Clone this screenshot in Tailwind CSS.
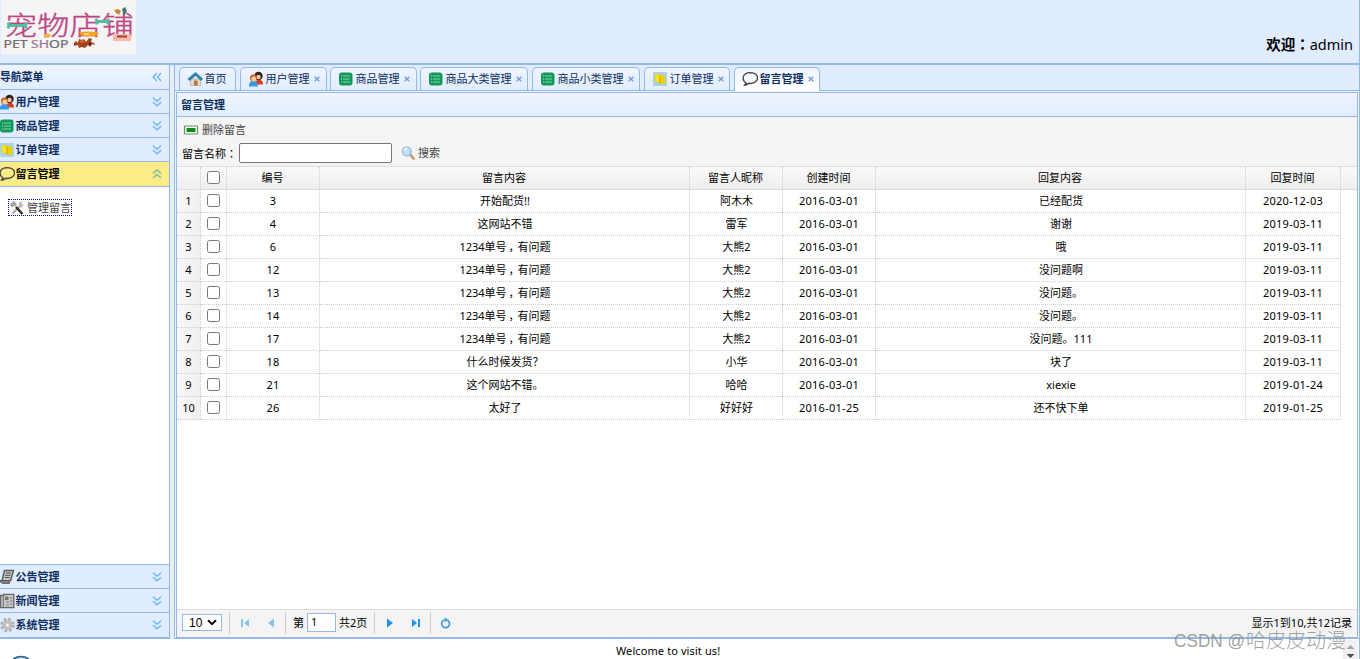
<!DOCTYPE html>
<html lang="zh-CN">
<head>
<meta charset="utf-8">
<title>留言管理</title>
<script src="https://cdn.jsdelivr.net/npm/@tailwindcss/browser@4"></script>
</head>
<body class="relative w-[1360px] h-[659px] overflow-hidden flex flex-col bg-white text-black text-[11px] leading-4 font-['Noto_Sans','Noto_Sans_CJK_SC',sans-serif]">
<svg class="hidden">
  <symbol id="down" viewBox="0 0 10 10"><path d="M1 .8 5 4.3 9 .8M1 5.2 5 8.7 9 5.2" fill="none" stroke="#6cb8f0" stroke-width="1.5"/></symbol>
  <symbol id="up" viewBox="0 0 10 10"><path d="M1 4.5 5 1 9 4.5M1 9 5 5.5 9 9" fill="none" stroke="#7fb9ab" stroke-width="1.5"/></symbol>
  <symbol id="left" viewBox="0 0 10 10"><path d="M4.8 1 1.2 5 4.8 9M9 1 5.4 5 9 9" fill="none" stroke="#6cb8f0" stroke-width="1.3"/></symbol>
  <symbol id="home" viewBox="0 0 16 16"><path d="M3.500 8h10v6.500h-10z" fill="#e0d9cd" stroke="#b1aba2" stroke-width=".7"/><path d="M1.500 8.800 8.500 3l6.500 5.800" fill="none" stroke="#2e86a8" stroke-width="3"/><path d="M7 9.500h3.600v5H7z" fill="#b9763a"/></symbol>
  <symbol id="users" viewBox="0 0 16 16"><path d="M7 13.500c0-3 1-4.500 4-4.500s4 2 4 4.500z" fill="#e23b22"/><circle cx="10.500" cy="5" r="4.200" fill="#2f211b"/><circle cx="10.500" cy="6" r="2.200" fill="#f5c79a"/><path d="M1 15.500C1 11.500 2.200 10 5.200 10s4.800 1.500 4.800 5.500z" fill="#359be5"/><circle cx="5.400" cy="7" r="3.500" fill="#c5601d"/><circle cx="5.800" cy="8" r="2.500" fill="#fbcf9c"/></symbol>
  <symbol id="list" viewBox="0 0 16 16"><rect x="1" y="1.500" width="13.500" height="13" rx="3" fill="#12985a"/><path d="M4.800 5h7.200M4.800 8h7.200M4.800 11h7.200" stroke="#86d4ab" stroke-width="1.200"/><path d="M3 5h1M3 8h1M3 11h1" stroke="#b6ead0" stroke-width="1"/></symbol>
  <symbol id="order" viewBox="0 0 16 16"><rect x="1" y="1" width="14" height="14" rx="1" fill="#a9d2f0"/><path d="m2.500 4 4.500-1.500 1.500 2 4-1 1.500 9-4.500.5-4-1.500-3-1z" fill="#edcf0b"/><path d="m7.800 4.500.5 8" stroke="#c6a600" stroke-width=".8"/><path d="m3 4.500 3.500-1 .7 6.500-3.200 1z" fill="#f8e32c"/></symbol>
  <symbol id="talk" viewBox="0 0 16 16"><path d="M4.200 12C-.8 8.800.3 1.800 8 1.600c7.600 0 9.200 5.600 5.800 8.900-1.900 1.800-4.700 2.200-7.200 1.800-1 1-2.700 2-4.800 2 1.500-.6 2.200-1.300 2.400-2.300z" fill="none" stroke="#4b4742" stroke-width="1.400"/></symbol>
  <symbol id="scroll" viewBox="0 0 16 16"><path d="M5.500 1.500h9l-3 10.300H3z" fill="#c9c9c9" stroke="#5c5c5c" stroke-width="1.500"/><path d="M7 4h5M6.300 6.300h5M5.600 8.600h5" stroke="#4b4b4b"/><path d="M1.200 11.500h8l1.500 2.800H3.500q-2.200-.3-2.300-2.800z" fill="#858585" stroke="#555"/></symbol>
  <symbol id="news" viewBox="0 0 16 16"><path d="M1.500 2.500h3V1.300h10.300v13.400H1.500z" fill="#c9c9c9" stroke="#666" stroke-width="1.300"/><path d="M4.300 3v11M7 9h3M7 12h3M11 5h2.500M11 8h2.500M11 11h2.500" stroke="#777" stroke-width="1.200"/><path d="M6 3.500h3.500V7H6z" fill="#777"/></symbol>
  <symbol id="gear" viewBox="0 0 16 16"><circle cx="8.500" cy="8" r="6" fill="none" stroke="#b0b0b0" stroke-width="2.600" stroke-dasharray="2.800 1.910"/><circle cx="8.500" cy="8" r="3.800" fill="#eee" stroke="#bbb" stroke-width="2.600"/><circle cx="8.500" cy="8" r="1.800" fill="#fff" stroke="#999" stroke-width=".6"/></symbol>
  <symbol id="tools" viewBox="0 0 16 16"><path d="M3.500 13.500 12 5" stroke="#aaa" stroke-width="2.200"/><path d="M10 2.500 13.500 1l-1 3 2 .5-1.500 3-3.500-.5z" fill="#bbb"/><path d="M2 3.500 5 1l3 3-1 2.500L5 6 3.500 7.500 1 5.500z" fill="#a5a5a5"/><path d="m7 7 6.500 7" stroke="#292929" stroke-width="2.500"/></symbol>
  <symbol id="minus" viewBox="0 0 16 16"><rect x="1.500" y="4" width="13" height="8" rx=".7" fill="#fff" stroke="#589a60" stroke-width="1.200"/><path d="M3.500 6h9v4h-9z" fill="#108a14"/></symbol>
  <symbol id="find" viewBox="0 0 16 16"><path d="m9 9.500 3.500 4" stroke="#c8935c" stroke-width="2.600" stroke-linecap="round"/><circle cx="5.800" cy="6.300" r="4.400" fill="#bfe1fb" stroke="#a6bdd4" stroke-width="1.500"/><path d="M3.400 6q.3-2.500 2.800-2.600" fill="none" stroke="#fff" stroke-width="1.300"/></symbol>
</svg>

<header class="h-[65px] shrink-0 flex justify-between border-b-2 border-r border-[#95b8e7] bg-[#e0ecff]">
  <svg class="ml-px block" width="135" height="54" viewBox="1 0 135 54">
    <rect x="1" width="135" height="54" fill="#f5f5f5"/>
    <g font-family="Noto Sans CJK SC" font-weight="300" font-size="26" fill="#bf4584" stroke="#bf4584" stroke-width=".35">
      <text x="5" y="35" textLength="129" lengthAdjust="spacingAndGlyphs">宠物店铺</text>
    </g>
    <path d="M10 25.500h15M97 21.500h10" stroke="#54bda1" stroke-width="2.800" stroke-linecap="round"/>
    <g fill="#54bda1"><circle cx="8.500" cy="24" r="1.700"/><circle cx="8.500" cy="27" r="1.700"/><circle cx="26" cy="24" r="1.700"/><circle cx="26" cy="27" r="1.700"/><circle cx="96.500" cy="20" r="1.700"/><circle cx="96.500" cy="23" r="1.700"/><circle cx="108" cy="20" r="1.700"/><circle cx="108" cy="23" r="1.700"/></g>
    <ellipse cx="47.500" cy="35.500" rx="3" ry="2" fill="#f2b334"/>
    <path d="M79 32.500q10-2 20 .5-2 4-9 3-8 2-11-3.500z" fill="#f0a51d"/><path d="M84 34h5" stroke="#fff"/>
    <path d="M113 34h18v7h-18z" fill="#f8b9a8"/><path d="M117 36.500h10" stroke="#a04236" stroke-width="2"/>
    <path d="m114 10 4-1 3 2-2 4-3-2z" fill="#c98735"/><path d="m122 9 3-2 2 4-3 5z" fill="#45796a"/>
    <path d="m74 43 2-2 2 2 1-4 3 1 2-1 2 3 3-4 3 1-1 3 3 1 1 2-3-1-2 3-2-2-3 3-3-1-3 1-1-3-4 1z" fill="#a5431e"/><circle cx="82" cy="41.500" r="1.800" fill="#dc6a2e"/><circle cx="90" cy="44" r="1.400" fill="#4e2013"/>
    <text x="3.500" y="47.500" font-family="Noto Sans" font-size="10" textLength="65" lengthAdjust="spacingAndGlyphs" fill="#716873" stroke="#716873" stroke-width=".2">PET <tspan fill="#b77b9f">SH</tspan>OP</text>
  </svg>
  <div class="pt-[34px] pr-[6px] text-[14.5px] leading-5"><b class="font-bold">欢迎<span lang="zh-TW" class="font-['Noto_Sans_CJK_TC']">：</span></b>admin</div>
</header>

<main class="h-[574px] shrink-0 flex bg-[#e6eef8]">
  <aside class="w-[170px] h-[574px] flex flex-col bg-white border-r border-b-2 border-[#95b8e7] font-bold text-[#0e2d5f]">
    <div class="h-[25px] shrink-0 flex items-center justify-between pr-[7px] border-b border-[#95b8e7] bg-linear-to-b from-[#eff5ff] to-[#e0ecff] tracking-[-0.2px]">导航菜单<svg class="size-[10px]"><use href="#left"/></svg></div>
    <nav id="topnav" class="flex flex-col"></nav>
    <div class="flex-1 pt-3 pl-2 font-normal">
      <a class="flex items-center w-16 h-[17px] border border-dotted border-[#0000b0] text-[#444]"><svg class="size-4 mr-0.5 shrink-0"><use href="#tools"/></svg>管理留言</a>
    </div>
    <nav id="botnav" class="flex flex-col"></nav>
  </aside>

  <section class="ml-1 w-[1186px] h-[574px] flex flex-col bg-[#eff5ff] border-x border-b border-[#95b8e7]">
    <div id="tabs" class="h-[26px] shrink-0 flex items-end gap-1 pl-1 bg-[#e0ecff] border-b border-[#95b8e7] text-[#0e2d5f]"></div>
    <div class="mt-px mx-px flex-1 flex flex-col border border-[#95b8e7] bg-white">
      <h1 class="h-6 shrink-0 flex items-center pl-1 border-b border-[#95b8e7] bg-linear-to-b from-[#eff5ff] to-[#e0ecff] font-bold text-[#0e2d5f]">留言管理</h1>
      <div class="h-[50px] shrink-0 border-b border-[#ddd] bg-[#f4f4f4]">
        <div class="h-[26px] flex items-center pl-[6px] text-[#444]"><svg class="size-4 mr-[3px]"><use href="#minus"/></svg>删除留言</div>
        <div class="flex items-center h-5 pl-[5px]"><span class="w-[57px]">留言名称<span lang="zh-TW" class="font-['Noto_Sans_CJK_TC']">：</span></span><input class="w-[153px] h-5 bg-white border border-[#767676] rounded-[2px]"><svg class="size-4 ml-[9px] mr-px"><use href="#find"/></svg><span class="text-[#444]">搜索</span></div>
      </div>
      <div id="grid" class="flex-1 flex flex-col"></div>
      <footer class="h-[28px] shrink-0 flex items-center pl-[5px] pr-[5px] pb-px border-t border-[#ddd] bg-[#f4f4f4]">
        <div class="w-10 h-[17px] mb-px flex items-center justify-between pl-[6px] pr-[4px] bg-white border border-[#95b8e7] text-[12px] font-['Liberation_Sans']">10<svg width="10" height="7" viewBox="0 0 10 7"><path d="m1 1.200 4 4 4-4" fill="none" stroke="#111" stroke-width="2"/></svg></div>
        <i class="ml-[7px] w-px h-[22px] bg-[#ccc]"></i>
        <svg class="ml-[10px]" width="10" height="10"><path d="M1 1h2v8H1zM9 1v8L4 5z" fill="#86c3ef"/></svg>
        <svg class="ml-[16px]" width="10" height="10"><path d="M8 .5v9L2 5z" fill="#86c3ef"/></svg>
        <i class="ml-[9px] w-px h-[22px] bg-[#ccc]"></i>
        <span class="ml-[7px] w-[14px]">第</span>
        <div class="w-[29px] h-[19px] mb-px pl-[3px] bg-white border border-[#95b8e7]">1</div>
        <span class="ml-[3px] w-[35px] whitespace-nowrap">共2页</span>
        <i class="w-px h-[22px] bg-[#ccc]"></i>
        <svg class="ml-[10px]" width="10" height="10"><path d="M2 .5v9L8 5z" fill="#1b93ea"/></svg>
        <svg class="ml-[16px]" width="10" height="10"><path d="M1 1v8L6 5zM7 1h2v8H7z" fill="#1b93ea"/></svg>
        <i class="ml-[9px] w-px h-[22px] bg-[#ccc]"></i>
        <svg class="ml-[9px]" width="11" height="12" viewBox="0 0 11 12"><path d="M7.500 3.200A4 4 0 1 1 4 3" fill="none" stroke="#3b9bdc" stroke-width="1.700"/><path d="m4.500.3 4 2.700-4 2.200z" fill="#3b9bdc"/></svg>
        <span class="ml-auto whitespace-nowrap">显示1到10,共12记录</span>
      </footer>
    </div>
  </section>
</main>

<div class="h-5 shrink-0 flex border-r border-[#95b8e7]">
  <svg class="ml-2 shrink-0" width="28" height="20"><circle cx="13" cy="30" r="12.500" fill="#c5d8ea" stroke="#285b8c" stroke-width="1.500"/></svg>
  <p class="flex-1 pt-1 pl-[580px] tracking-[0.1px]">Welcome to visit us!</p>
  <svg class="shrink-0 mt-px mr-[1px]" width="15" height="19"><path d="M0 0h15v19H0z" fill="#f1f1f1"/><path d="M3.500 9 7.500 5l4 4z" fill="#a3a3a3"/><path d="m3.500 14 4 4 4-4z" fill="#505050"/></svg>
</div>
<div class="absolute left-[1174px] top-[626px] flex whitespace-nowrap text-[20px] leading-7 text-[#888]/80 font-light font-['Noto_Sans_CJK_SC',sans-serif]"><svg width="72" height="28" class="shrink-0"><text x="0" y="21" textLength="71" lengthAdjust="spacingAndGlyphs" class="fill-[#888]/80 font-['Liberation_Sans'] text-[19px]">CSDN @</text></svg>哈皮皮动漫</div>

<script>
const icon = (id, cls) => `<svg class="${cls}"><use href="#${id}"/></svg>`;
const navItem = (id, text, cls, arrow) => `<a class="${cls}">${icon(id, 'size-4 -ml-px mr-[0.5px] shrink-0')}${text}${icon(arrow, 'size-[10px] ml-auto')}</a>`;
const item24 = 'h-6 flex items-center pr-[7px] bg-[#e0ecff] border-b border-[#95b8e7]';
topnav.innerHTML = navItem('users', '用户管理', item24, 'down') + navItem('list', '商品管理', item24, 'down') + navItem('order', '订单管理', item24, 'down')
  + navItem('talk', '留言管理', 'h-[25px] flex items-center pr-[7px] bg-[#fbec88] border-b border-[#95b8e7] text-black', 'up');
const low = 'h-6 flex items-center pr-[7px] bg-[#e0ecff] border-t border-[#95b8e7]';
botnav.innerHTML = navItem('scroll', '公告管理', low, 'down') + navItem('news', '新闻管理', low, 'down') + navItem('gear', '系统管理', 'h-[25px] flex items-center pr-[7px] bg-[#e0ecff] border-t border-[#95b8e7]', 'down');

const tab = 'h-[23px] flex items-center pl-[7px] rounded-t-[5px] border border-b-0 border-[#95b8e7] bg-linear-to-b from-[#eff5ff] to-[#e0ecff] whitespace-nowrap';
const active = 'h-6 -mb-px pb-px flex items-center pl-[7px] rounded-t-[5px] border border-b-0 border-[#95b8e7] bg-linear-to-b from-[#eff5ff] to-white whitespace-nowrap font-bold';
tabs.innerHTML = [['home','首页',57],['users','用户管理',87],['list','商品管理',87],['list','商品大类管理',108],['list','商品小类管理',108],['order','订单管理',86],['talk','留言管理',86]]
  .map(([id, t, w], i) => `<div class="${i === 6 ? active : tab}" style="width:${w}px;${w === 87 ? 'margin-right:-1px' : ''}">${icon(id, 'size-4 mr-[1.5px] shrink-0')}${t}${i ? '<svg class="ml-[4px]" width="6" height="6"><path d="M.7.7l4.600 4.600M5.300.7.7 5.300" stroke="#7ba1d4" stroke-width="1.500"/></svg>' : ''}</div>`).join('');

const widths = [93, 370, 93, 93, 370, 95];
const comma = '<span class="relative left-[2px]">，</span>';
const q = `1234单号${comma}有问题`;
const rows = [
  ['3','开始配货!!','阿木木','2016-03-01','已经配货','2020-12-03'],
  ['4','这网站不错','雷军','2016-03-01','谢谢','2019-03-11'],
  ['6',q,'大熊2','2016-03-01','哦','2019-03-11'],
  ['12',q,'大熊2','2016-03-01','没问题啊','2019-03-11'],
  ['13',q,'大熊2','2016-03-01','没问题。','2019-03-11'],
  ['14',q,'大熊2','2016-03-01','没问题。','2019-03-11'],
  ['17',q,'大熊2','2016-03-01','没问题。111','2019-03-11'],
  ['18','什么时候发货？','小华','2016-03-01','块了','2019-03-11'],
  ['21','这个网站不错。','哈哈','2016-03-01','xiexie','2019-01-24'],
  ['26','太好了','好好好','2016-01-25','还不快下单','2019-01-25'],
];
const box = '<input type="checkbox" class="size-[13px] mb-px">';
const cell = (t, w, cls) => `<div class="${cls}" style="width:${w}px">${t}</div>`;
const head = 'flex items-center justify-center pr-px border-r border-dotted border-[#ccc]';
const body = 'flex items-center justify-center pl-px border-r border-b border-dotted border-[#ccc]';
const date = 'flex items-center justify-center border-r border-b border-dotted border-[#ccc] tracking-[0.27px]';
const headBox = 'flex items-center justify-center border-r border-dotted border-[#ccc]';
grid.innerHTML = '<div class="h-[23px] flex border-b border-[#ddd] bg-linear-to-b from-[#f9f9f9] to-[#efefef]">'
  + cell('', 24, head) + cell(box, 26, headBox)
  + ['编号','留言内容','留言人昵称','创建时间','回复内容','回复时间'].map((t, i) => cell(t, widths[i], head)).join('') + '</div>'
  + rows.map((r, n) => '<div class="h-[23px] flex">'
    + cell(n + 1, 24, 'flex items-center justify-center border-r border-b border-dotted border-[#ccc] bg-linear-to-r from-[#f9f9f9] to-[#efefef]')
    + cell(box, 26, 'flex items-center justify-center border-r border-b border-dotted border-[#ccc]')
    + r.map((t, i) => cell(`<span>${t}</span>`, widths[i], i === 0 || i === 3 || i === 5 ? date : body)).join('') + '</div>').join('');
</script>
</body>
</html>
